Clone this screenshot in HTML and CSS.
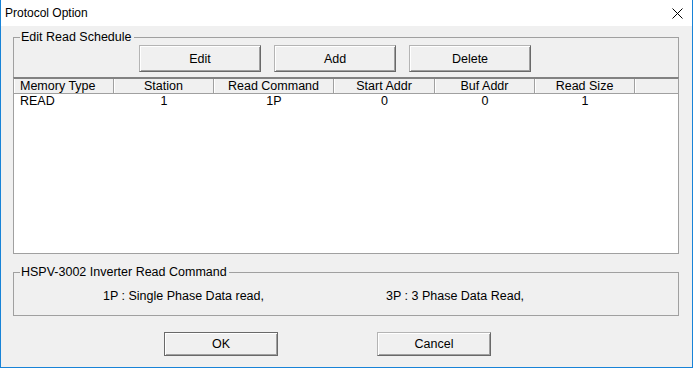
FILE: index.html
```html
<!DOCTYPE html>
<html>
<head>
<meta charset="utf-8">
<link rel="stylesheet" href="styles.css">
</head>
<body>
<div class="window">
  <div class="titlebar">
    <span class="title">Protocol Option</span>
    <svg class="close" width="11" height="11" viewBox="0 0 11 11"><path d="M0.5 0.5 L10.5 10.5 M10.5 0.5 L0.5 10.5" stroke="#000" stroke-width="1" fill="none"/></svg>
  </div>
  <div class="client">
    <div class="group group-top">
      <span class="legend">Edit Read Schedule</span>
      <div class="btn-row">
        <button class="btn btn-wide">Edit</button>
        <button class="btn btn-wide">Add</button>
        <button class="btn btn-wide">Delete</button>
      </div>
      <div class="list">
        <div class="header">
          <div class="hcell c1 left">Memory Type</div>
          <div class="hcell c2">Station</div>
          <div class="hcell c3">Read Command</div>
          <div class="hcell c4">Start Addr</div>
          <div class="hcell c5">Buf Addr</div>
          <div class="hcell c6">Read Size</div>
          <div class="hcell crest"></div>
        </div>
        <div class="row">
          <div class="cell c1 left">READ</div>
          <div class="cell c2">1</div>
          <div class="cell c3">1P</div>
          <div class="cell c4">0</div>
          <div class="cell c5">0</div>
          <div class="cell c6">1</div>
        </div>
      </div>
    </div>
    <div class="group group-info">
      <span class="legend">HSPV-3002 Inverter Read Command</span>
      <div class="info-line">
        <span class="info-a">1P : Single Phase Data read,</span>
        <span class="info-b">3P : 3 Phase Data Read,</span>
      </div>
    </div>
    <div class="footer">
      <button class="btn btn-dlg btn-default">OK</button>
      <button class="btn btn-dlg">Cancel</button>
    </div>
  </div>
</div>
</body>
</html>
```

FILE: styles.css
```css
html, body {
  margin: 0;
  padding: 0;
  background: #f0f0f0;
}
.window {
  width: 693px;
  height: 368px;
  box-sizing: border-box;
  border: 1px solid #1883d7;
  border-top: none;
  background: #f0f0f0;
  font-family: "Liberation Sans", Arial, sans-serif;
  color: #000;
  display: flex;
  flex-direction: column;
}
.titlebar {
  height: 26px;
  background: #fff;
  display: flex;
  align-items: center;
  justify-content: space-between;
  padding-left: 4px;
  flex: none;
}
.title {
  font-size: 12px;
  line-height: 14px;
}
.close {
  margin-right: 9px;
  display: block;
}
.client {
  padding: 0 0 0 12px;
}
.group {
  position: relative;
  box-sizing: border-box;
  width: 666px;
  border: 1px solid #a0a0a0;
}
.legend {
  position: absolute;
  top: -8px;
  left: 6px;
  padding: 0 2px 0 1px;
  background: #f0f0f0;
  font-size: 12.5px;
  line-height: 15px;
}
.group-top {
  margin-top: 11px;
  border-bottom: none;
  padding-top: 7px;
}
.btn-row {
  display: flex;
  gap: 13px;
  padding-left: 125px;
}
.btn {
  box-sizing: border-box;
  margin: 0;
  padding: 0;
  font-family: "Liberation Sans", Arial, sans-serif;
  font-size: 12.5px;
  color: #000;
  background: #f0f0f0;
  border: 1px solid;
  border-color: #b4b4b4 #696969 #696969 #b4b4b4;
  box-shadow: inset 1px 1px 0 #fff, inset -1px -1px 0 #a0a0a0;
}
.btn-wide {
  width: 122px;
  height: 27px;
}
.list {
  margin: 5px -1px 0 -1px;
  height: 177px;
  box-sizing: border-box;
  border: 1px solid #a0a0a0;
  border-top: 2px solid #828282;
  background: #fff;
  font-size: 12.5px;
}
.header {
  display: flex;
  height: 15px;
  box-sizing: border-box;
  border-bottom: 1px solid #a0a0a0;
  background: #f0f0f0;
}
.hcell {
  box-sizing: border-box;
  height: 14px;
  line-height: 14px;
  text-align: center;
  border-right: 1px solid #a0a0a0;
  box-shadow: inset 1px 0 0 #fff;
  white-space: nowrap;
  overflow: hidden;
}
.hcell.crest {
  flex: 1;
  border-right: none;
}
.c1 { width: 100px; }
.c2 { width: 100px; }
.c3 { width: 120px; }
.c4 { width: 101px; }
.c5 { width: 100px; }
.c6 { width: 100px; }
.row {
  display: flex;
  height: 14px;
}
.cell {
  box-sizing: border-box;
  line-height: 14px;
  text-align: center;
  white-space: nowrap;
}
.hcell.left,
.cell.left {
  text-align: left;
  padding-left: 6px;
}
.group-info {
  margin-top: 18px;
  height: 44px;
}
.info-line {
  display: flex;
  padding: 16px 0 0 89px;
  font-size: 12.5px;
  line-height: 15px;
}
.info-a {
  width: 283px;
}
.footer {
  display: flex;
  gap: 99px;
  margin-top: 16px;
  padding-left: 151px;
}
.btn-dlg {
  width: 114px;
  height: 24px;
}
.btn-default {
  border-color: #696969;
}
```
